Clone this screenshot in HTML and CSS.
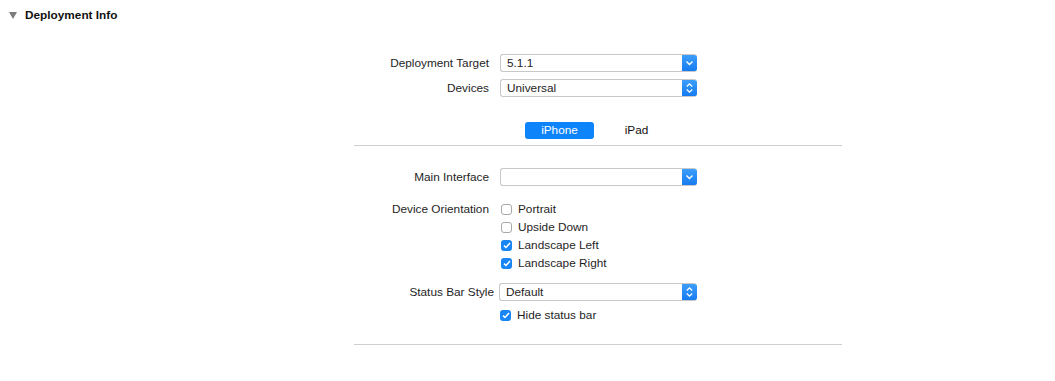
FILE: index.html
```html
<!DOCTYPE html>
<html lang="en">
<head>
    <meta charset="UTF-8">
    <title>Deployment Info</title>
    <link rel="stylesheet" href="styles.css">
</head>
<body>
    <div class="header">
        <span class="disclosure"></span>
        <span class="title">Deployment Info</span>
    </div>

    <div class="section">
        <div class="form top-form">
            <label>Deployment Target</label>
            <div class="popup">
                <span class="value">5.1.1</span>
                <span class="arrow">
                    <svg width="9" height="6" viewBox="0 0 9 6"><path d="M1.5 1.5 L4.5 4.5 L7.5 1.5" fill="none" stroke="#fff" stroke-width="1.4"/></svg>
                </span>
            </div>
            <label>Devices</label>
            <div class="popup">
                <span class="value">Universal</span>
                <span class="arrow">
                    <svg width="9" height="12" viewBox="0 0 9 12"><path d="M1.8 4.5 L4.5 1.8 L7.2 4.5 M1.8 7.5 L4.5 10.2 L7.2 7.5" fill="none" stroke="#fff" stroke-width="1.3"/></svg>
                </span>
            </div>
        </div>

        <div class="tabs">
            <span class="tab active">iPhone</span>
            <span class="tab">iPad</span>
        </div>

        <div class="form mid-form">
            <label>Main Interface</label>
            <div class="popup">
                <span class="value"></span>
                <span class="arrow">
                    <svg width="9" height="6" viewBox="0 0 9 6"><path d="M1.5 1.5 L4.5 4.5 L7.5 1.5" fill="none" stroke="#fff" stroke-width="1.4"/></svg>
                </span>
            </div>

            <label class="top-label">Device Orientation</label>
            <div class="checks">
                <div class="check"><span class="box"></span>Portrait</div>
                <div class="check"><span class="box"></span>Upside Down</div>
                <div class="check"><span class="box on"><svg width="8" height="7" viewBox="0 0 8 7"><path d="M1 3.6 L3 5.5 L7 1" fill="none" stroke="#fff" stroke-width="1.5"/></svg></span>Landscape Left</div>
                <div class="check"><span class="box on"><svg width="8" height="7" viewBox="0 0 8 7"><path d="M1 3.6 L3 5.5 L7 1" fill="none" stroke="#fff" stroke-width="1.5"/></svg></span>Landscape Right</div>
            </div>

            <label class="status-label"><span>Status Bar Style</span></label>
            <div class="popup status-popup">
                <span class="value">Default</span>
                <span class="arrow">
                    <svg width="9" height="12" viewBox="0 0 9 12"><path d="M1.8 4.5 L4.5 1.8 L7.2 4.5 M1.8 7.5 L4.5 10.2 L7.2 7.5" fill="none" stroke="#fff" stroke-width="1.3"/></svg>
                </span>
            </div>

            <span></span>
            <div class="check hide-bar"><span class="box on"><svg width="8" height="7" viewBox="0 0 8 7"><path d="M1 3.6 L3 5.5 L7 1" fill="none" stroke="#fff" stroke-width="1.5"/></svg></span>Hide status bar</div>
        </div>
        <div class="rule"></div>
    </div>
</body>
</html>
```

FILE: styles.css
```css
body {
    margin: 0;
    background: #fff;
    font-family: "Liberation Sans", Arial, sans-serif;
    font-size: 11.8px;
    color: #1e1e1e;
}
.header {
    display: flex;
    align-items: center;
    height: 30px;
    padding-left: 9px;
}
.disclosure {
    width: 0;
    height: 0;
    border-left: 4px solid transparent;
    border-right: 4px solid transparent;
    border-top: 7px solid #7c7c7c;
    margin-right: 8px;
}
.title {
    font-weight: bold;
    color: #111;
}
.section {
    margin-left: 354px;
    width: 488px;
}
.form {
    display: grid;
    grid-template-columns: 135px 197px;
    column-gap: 11px;
    align-items: center;
}
.form label {
    text-align: right;
    white-space: nowrap;
}
.top-form {
    margin-top: 24px;
    row-gap: 7px;
}
.popup {
    display: flex;
    height: 18px;
    box-sizing: border-box;
    border: 1px solid #c8c8c8;
    border-right: none;
    border-radius: 3px;
    background: #fff;
    overflow: hidden;
    position: relative;
}
.popup .value {
    flex: 1;
    padding-left: 6px;
    line-height: 16px;
}
.popup .arrow {
    width: 15px;
    display: flex;
    align-items: center;
    justify-content: center;
    background: linear-gradient(#3ea0fb, #1479f0);
    border-radius: 0 3px 3px 0;
    margin-top: -1px;
    margin-bottom: -1px;
}
.tabs {
    display: flex;
    margin-top: 25px;
    margin-left: 171px;
    gap: 8px;
}
.tab {
    width: 69px;
    height: 17px;
    line-height: 17px;
    text-align: center;
    border-radius: 3px;
    color: #111;
}
.tab.active {
    background: #0d84fa;
    color: #fff;
}
.mid-form {
    border-top: 1px solid #cfcfcf;
    margin-top: 6px;
    padding-top: 22px;
}
.top-label {
    align-self: start;
    line-height: 18px;
    margin-top: 14px;
}
.checks {
    margin-top: 14px;
}
.check {
    display: flex;
    align-items: center;
    height: 18px;
    padding-left: 1px;
}
.box {
    width: 11px;
    height: 11px;
    box-sizing: border-box;
    border: 1px solid #a9a9a9;
    border-radius: 3px;
    margin-right: 6px;
    display: flex;
    align-items: center;
    justify-content: center;
    background: #fff;
}
.box.on {
    border: none;
    background: #1a86f5;
}
.status-label {
    margin-top: 11px;
    margin-right: -5px;
    overflow: hidden;
}
.status-popup {
    margin-top: 11px;
    margin-left: -1px;
}
.hide-bar {
    margin-top: 5px;
    padding-left: 0;
}
.rule {
    border-top: 1px solid #cfcfcf;
    margin-top: 20px;
}
```
